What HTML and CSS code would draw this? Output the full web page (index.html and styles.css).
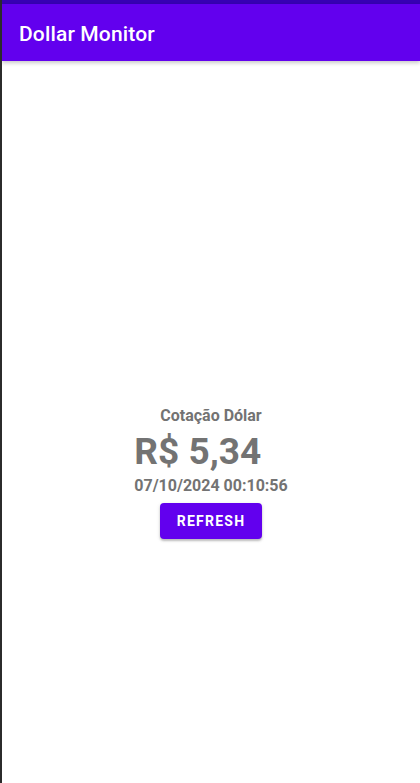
FILE: index.html
```html
<!DOCTYPE html>
<html lang="pt">
<head>
<meta charset="utf-8">
<title>Dollar Monitor</title>
<link rel="stylesheet" href="styles.css">
</head>
<body>
<div class="app">
  <div class="status-bar"></div>
  <header class="app-bar">
    <h1 class="app-title">Dollar Monitor</h1>
  </header>
  <main class="content">
    <div class="quote">
      <p class="quote-label">Cotação Dólar</p>
      <div class="quote-values">
        <p class="quote-price">R$ 5,34</p>
        <p class="quote-date">07/10/2024 00:10:56</p>
      </div>
      <button class="refresh-btn" type="button">REFRESH</button>
    </div>
  </main>
</div>
</body>
</html>
```
FILE: styles.css
```css
html, body {
  margin: 0;
  padding: 0;
  height: 100%;
}
body {
  background: #ffffff;
  font-family: Roboto, "Liberation Sans", sans-serif;
  border-left: 2px solid #2b2b2b;
  box-sizing: border-box;
}
.app {
  display: flex;
  flex-direction: column;
  min-height: 100%;
}
.status-bar {
  height: 4px;
  background: #3700b3;
}
.app-bar {
  height: 57px;
  background: #6200ee;
  display: flex;
  align-items: center;
  padding-left: 17px;
  box-shadow: 0 2px 4px rgba(0, 0, 0, 0.22);
  position: relative;
  z-index: 1;
}
.app-title {
  margin: 0;
  color: #ffffff;
  font-size: 21px;
  font-weight: 500;
  letter-spacing: 0.15px;
  padding-top: 2px;
}
.content {
  flex: 1;
  padding-top: 345px;
  display: flex;
  flex-direction: column;
  align-items: center;
}
.quote {
  display: flex;
  flex-direction: column;
  align-items: center;
}
.quote-label {
  margin: 0;
  font-size: 16px;
  font-weight: 700;
  color: #737373;
}
.quote-values {
  display: flex;
  flex-direction: column;
  align-items: flex-start;
  margin-top: 5px;
}
.quote-price {
  margin: 0;
  font-size: 37px;
  font-weight: 700;
  color: #737373;
  line-height: 44px;
}
.quote-date {
  margin: 2px 0 0 0;
  font-size: 16px;
  font-weight: 700;
  color: #737373;
}
.refresh-btn {
  margin-top: 8px;
  height: 36px;
  padding: 0 17px;
  border: none;
  border-radius: 4px;
  background: #6200ee;
  color: #ffffff;
  font-family: Roboto, "Liberation Sans", sans-serif;
  font-size: 14px;
  font-weight: 700;
  letter-spacing: 1.25px;
  box-shadow: 0 2px 2px rgba(0, 0, 0, 0.2), 0 1px 4px rgba(0, 0, 0, 0.12);
}
```
